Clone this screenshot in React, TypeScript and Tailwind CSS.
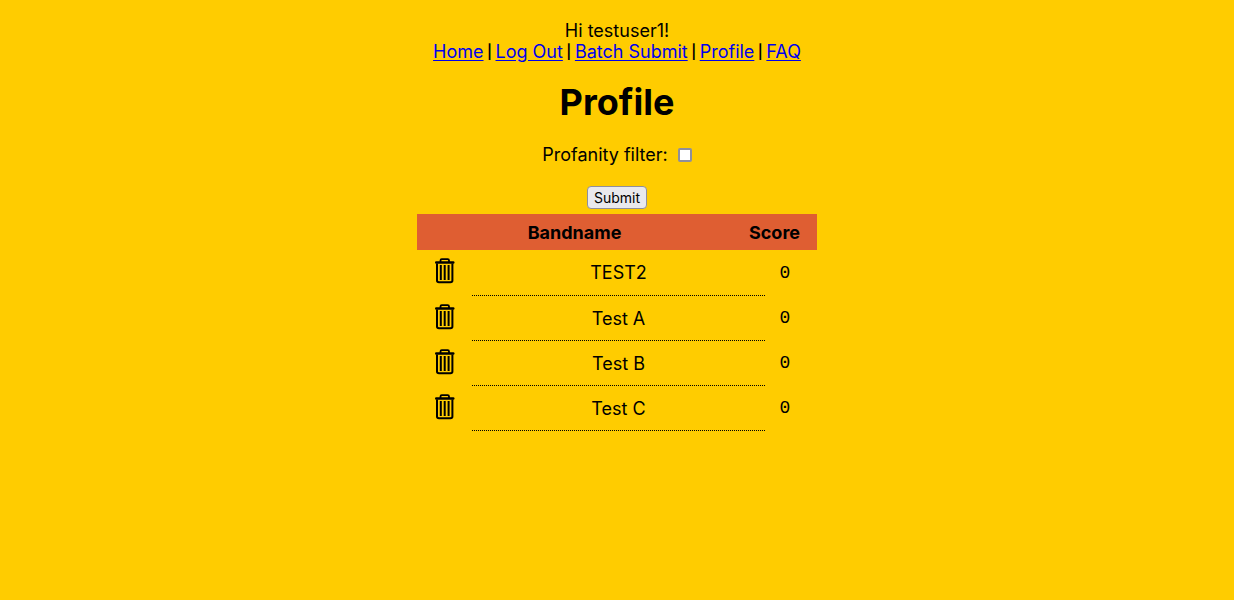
import React from 'react';

const links = ['Home', 'Log Out', 'Batch Submit', 'Profile', 'FAQ'];

const bands = [
  { name: 'TEST2', score: 0 },
  { name: 'Test A', score: 0 },
  { name: 'Test B', score: 0 },
  { name: 'Test C', score: 0 },
];

function TrashIcon() {
  return (
    <svg width="20" height="26" viewBox="0 0 20 26" fill="none" stroke="currentColor" aria-hidden="true">
      <path d="M5.5 4V2.5Q5.5 1.2 6.8 1.2H12.7Q14 1.2 14 2.5V4" strokeWidth="1.8" />
      <path d="M1.2 4.5H18.3" strokeWidth="2.4" strokeLinecap="round" />
      <path d="M2 5.5V22.5Q2 24.3 4 24.3H15.4Q17.4 24.3 17.4 22.5V5.5" strokeWidth="2" />
      <path d="M5.8 7V22M9.7 7V22M13.6 7V22" strokeWidth="2" />
    </svg>
  );
}

export default function App() {
  const [filter, setFilter] = React.useState(false);

  return (
    <div className="min-h-screen bg-[#ffcc00] px-4 pt-5 pb-8 text-center font-['Inter',sans-serif] text-lg leading-[21px] text-black">
      <header>
        <p>Hi testuser1!</p>
        <nav className="flex flex-wrap justify-center">
          {links.map((label, i) => (
            <React.Fragment key={label}>
              {i > 0 && <span className="w-3 text-sm leading-[21px] font-semibold">|</span>}
              <a href="#" className="text-[#0000ee] underline underline-offset-2">
                {label}
              </a>
            </React.Fragment>
          ))}
        </nav>
      </header>

      <main>
        <h1 className="mt-5 text-4xl leading-10 font-bold">Profile</h1>

        <form onSubmit={(e) => e.preventDefault()}>
          <div className="mt-5 flex items-center justify-center gap-2.5 pt-0.5">
            <label htmlFor="profanity">Profanity filter:</label>
            <input
              id="profanity"
              type="checkbox"
              checked={filter}
              onChange={(e) => setFilter(e.target.checked)}
              className="size-3.5 appearance-none rounded-xs border-2 border-[#8f8f9d] bg-white checked:bg-[#0060df]"
            />
          </div>
          <button
            type="submit"
            className="mx-auto mt-[21px] mb-[5px] block rounded-sm border border-[#8f8f9d] bg-[#e9e9ed] px-1.5 text-sm leading-[21px]"
          >
            Submit
          </button>
        </form>

        <table className="mx-auto w-full max-w-[400px] table-fixed border-separate border-spacing-0">
          <colgroup>
            <col className="w-[55px]" />
            <col />
            <col className="w-[33px]" />
            <col className="w-[52px]" />
          </colgroup>
          <thead>
            <tr className="h-9 bg-[#df5e32]">
              <th colSpan={2} scope="col" className="p-0 font-bold">
                Bandname
              </th>
              <th colSpan={2} scope="col" className="p-0 font-bold">
                Score
              </th>
            </tr>
          </thead>
          <tbody>
            {bands.map((band) => (
              <tr key={band.name} className="h-[45px] first:h-[46px]">
                <td className="p-0 pb-1">
                  <button type="button" aria-label={`Delete ${band.name}`} className="mx-auto block">
                    <TrashIcon />
                  </button>
                </td>
                <td colSpan={2} className="border-b border-dotted border-black p-0">
                  {band.name}
                </td>
                <td className="p-0 pr-3 font-['Liberation_Mono',monospace]">{band.score}</td>
              </tr>
            ))}
          </tbody>
        </table>
      </main>
    </div>
  );
}
